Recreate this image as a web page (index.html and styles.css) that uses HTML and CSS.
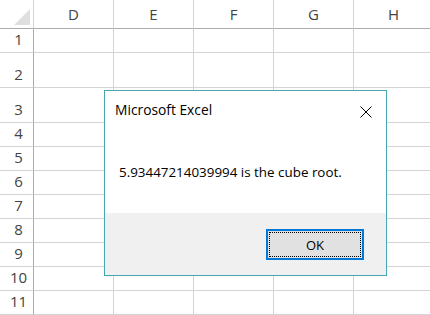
FILE: index.html
```html
<!DOCTYPE html>
<html lang="en">
<head>
  <meta charset="UTF-8" />
  <title>Microsoft Excel</title>
  <link rel="stylesheet" href="styles.css">
</head>
<body>
  <div class="sheet">
    <div class="grid">
      <div class="corner">
        <svg width="33" height="28" viewBox="0 0 33 28"><polygon points="14,25 30,25 30,9" fill="#dfdfdf"/></svg>
      </div>
      <div class="colhead">D</div><div class="colhead">E</div><div class="colhead">F</div><div class="colhead">G</div><div class="colhead">H</div>

      <div class="rowhead">1</div><div class="cell"></div><div class="cell"></div><div class="cell"></div><div class="cell"></div><div class="cell"></div>
      <div class="rowhead">2</div><div class="cell"></div><div class="cell"></div><div class="cell"></div><div class="cell"></div><div class="cell"></div>
      <div class="rowhead">3</div><div class="cell"></div><div class="cell"></div><div class="cell"></div><div class="cell"></div><div class="cell"></div>
      <div class="rowhead">4</div><div class="cell"></div><div class="cell"></div><div class="cell"></div><div class="cell"></div><div class="cell"></div>
      <div class="rowhead">5</div><div class="cell"></div><div class="cell"></div><div class="cell"></div><div class="cell"></div><div class="cell"></div>
      <div class="rowhead">6</div><div class="cell"></div><div class="cell"></div><div class="cell"></div><div class="cell"></div><div class="cell"></div>
      <div class="rowhead">7</div><div class="cell"></div><div class="cell"></div><div class="cell"></div><div class="cell"></div><div class="cell"></div>
      <div class="rowhead">8</div><div class="cell"></div><div class="cell"></div><div class="cell"></div><div class="cell"></div><div class="cell"></div>
      <div class="rowhead">9</div><div class="cell"></div><div class="cell"></div><div class="cell"></div><div class="cell"></div><div class="cell"></div>
      <div class="rowhead">10</div><div class="cell"></div><div class="cell"></div><div class="cell"></div><div class="cell"></div><div class="cell"></div>
      <div class="rowhead">11</div><div class="cell"></div><div class="cell"></div><div class="cell"></div><div class="cell"></div><div class="cell"></div>
    </div>

    <div class="msgbox">
      <div class="msg-main">
        <div class="msg-title">
          <span>Microsoft Excel</span>
          <svg class="msg-close" width="12" height="12" viewBox="0 0 12 12"><path d="M0.5 0.5 L11.5 11.5 M11.5 0.5 L0.5 11.5" stroke="#000" stroke-width="1" fill="none"/></svg>
        </div>
        <div class="msg-text">5.93447214039994 is the cube root.</div>
      </div>
      <div class="msg-footer">
        <button class="msg-btn"><span>OK</span></button>
      </div>
    </div>
  </div>
</body>
</html>
```

FILE: styles.css
```css
html, body { margin: 0; padding: 0; background: #fff; }
body { font-family: "Open Sans", "Noto Sans", sans-serif; overflow: hidden; }

.sheet { position: relative; width: 430px; height: 315px; }

.grid {
  display: grid;
  grid-template-columns: 34px repeat(5, 80px);
  grid-template-rows: 29px 24px 35px 35px repeat(8, 24px);
}
.grid > div { box-sizing: border-box; }

.cell { border-right: 1px solid #d4d4d4; border-bottom: 1px solid #d4d4d4; }

.corner { border-right: 1px solid #d4d4d4; border-bottom: 1px solid #ababab; }
.corner svg { display: block; }

.colhead {
  display: flex; align-items: center; justify-content: center;
  border-right: 1px solid #d4d4d4; border-bottom: 1px solid #ababab;
  font-size: 15px; color: #444; padding-bottom: 1px;
}
.rowhead {
  display: flex; align-items: flex-end; justify-content: center;
  border-right: 1px solid #ababab; border-bottom: 1px solid #d4d4d4;
  font-size: 15px; line-height: 15px; color: #444;
  padding: 0 0 5px 4px;
}

.msgbox {
  position: absolute; left: 104px; top: 90px;
  width: 283px; height: 186px; box-sizing: border-box;
  border: 1px solid #45a8b0; background: #fff;
  display: flex; flex-direction: column;
  font-size: 13.4px; color: #000;
}
.msg-main { flex: 1; }
.msg-title {
  display: flex; justify-content: space-between; align-items: center;
  padding: 8px 14px 0 10px; height: 20px;
  font-size: 13.8px;
}
.msg-close { margin-top: 6px; }
.msg-text { padding: 44px 0 0 14px; }
.msg-footer {
  height: 62px; background: #f0f0f0;
  display: flex; justify-content: flex-end; align-items: flex-start;
  padding: 16px 22px 0 0; box-sizing: border-box;
}
.msg-btn {
  width: 98px; height: 31px; box-sizing: border-box;
  border: 2px solid #0078d7; background: #e1e1e1; padding: 1px;
  font-family: inherit; font-size: 13px; color: #000;
}
.msg-btn span {
  display: flex; align-items: center; justify-content: center;
  height: 100%; border: 1px dotted #000; box-sizing: border-box;
}
```
